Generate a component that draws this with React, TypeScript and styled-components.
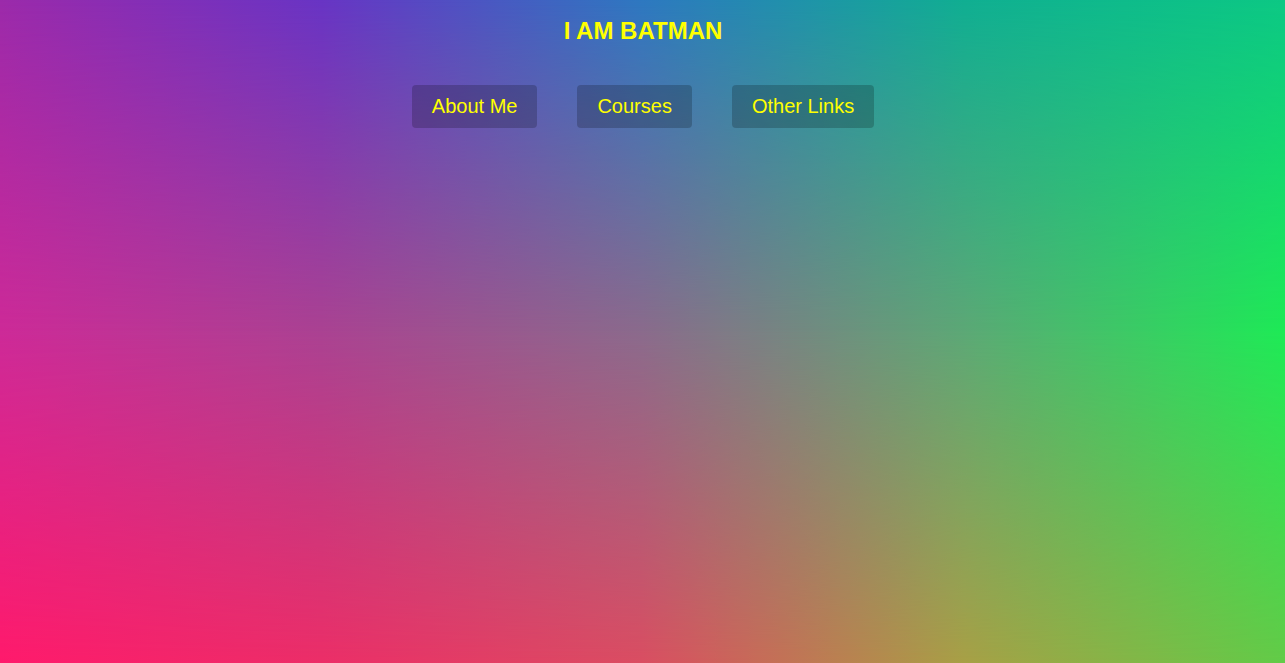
import React from "react";
import styled, { createGlobalStyle } from "styled-components";

const GlobalStyle = createGlobalStyle`
  html, body {
    margin: 0;
    padding: 0;
  }
  body {
    font-family: "Liberation Sans", Arial, sans-serif;
  }
`;

const Page = styled.div`
  position: relative;
  min-height: 100vh;
  overflow: hidden;
  box-sizing: border-box;
  padding-top: 17px;
  padding-left: 1px;
  background: linear-gradient(
    to right,
    rgb(255, 26, 108) 0%,
    rgb(236, 46, 104) 25%,
    rgb(218, 78, 98) 50%,
    rgb(168, 160, 70) 75%,
    rgb(98, 204, 72) 100%
  );

  &::before,
  &::after {
    content: "";
    position: absolute;
    inset: 0;
    pointer-events: none;
  }

  &::before {
    background: linear-gradient(
      to right,
      rgb(205, 42, 152) 0%,
      rgb(170, 66, 146) 25%,
      rgb(138, 107, 140) 50%,
      rgb(92, 168, 118) 75%,
      rgb(30, 234, 86) 100%
    );
    -webkit-mask-image: linear-gradient(to bottom, #000 0%, #000 50%, transparent 100%);
    mask-image: linear-gradient(to bottom, #000 0%, #000 50%, transparent 100%);
  }

  &::after {
    background: linear-gradient(
      to right,
      rgb(155, 42, 170) 0%,
      rgb(104, 52, 196) 25%,
      rgb(45, 120, 192) 50%,
      rgb(16, 174, 146) 75%,
      rgb(12, 200, 132) 100%
    );
    -webkit-mask-image: linear-gradient(to bottom, #000 0%, transparent 50%);
    mask-image: linear-gradient(to bottom, #000 0%, transparent 50%);
  }
`;

const Content = styled.div`
  position: relative;
  z-index: 1;
  display: flex;
  flex-direction: column;
  align-items: center;
`;

const Title = styled.h1`
  margin: 0;
  font-size: 24px;
  line-height: 28px;
  font-weight: 700;
  color: #ffff00;
`;

const Nav = styled.nav`
  margin-top: 40px;
  display: flex;
  gap: 40px;
`;

const NavLink = styled.a`
  display: block;
  padding: 10px 20px;
  font-size: 20px;
  line-height: 23px;
  color: #ffff00;
  text-decoration: none;
  background: rgba(0, 0, 0, 0.2);
  border-radius: 4px;
`;

export default function App() {
  return (
    <>
      <GlobalStyle />
      <Page>
        <Content>
          <Title>I AM BATMAN</Title>
          <Nav>
            <NavLink href="#about">About Me</NavLink>
            <NavLink href="#courses">Courses</NavLink>
            <NavLink href="#links">Other Links</NavLink>
          </Nav>
        </Content>
      </Page>
    </>
  );
}
